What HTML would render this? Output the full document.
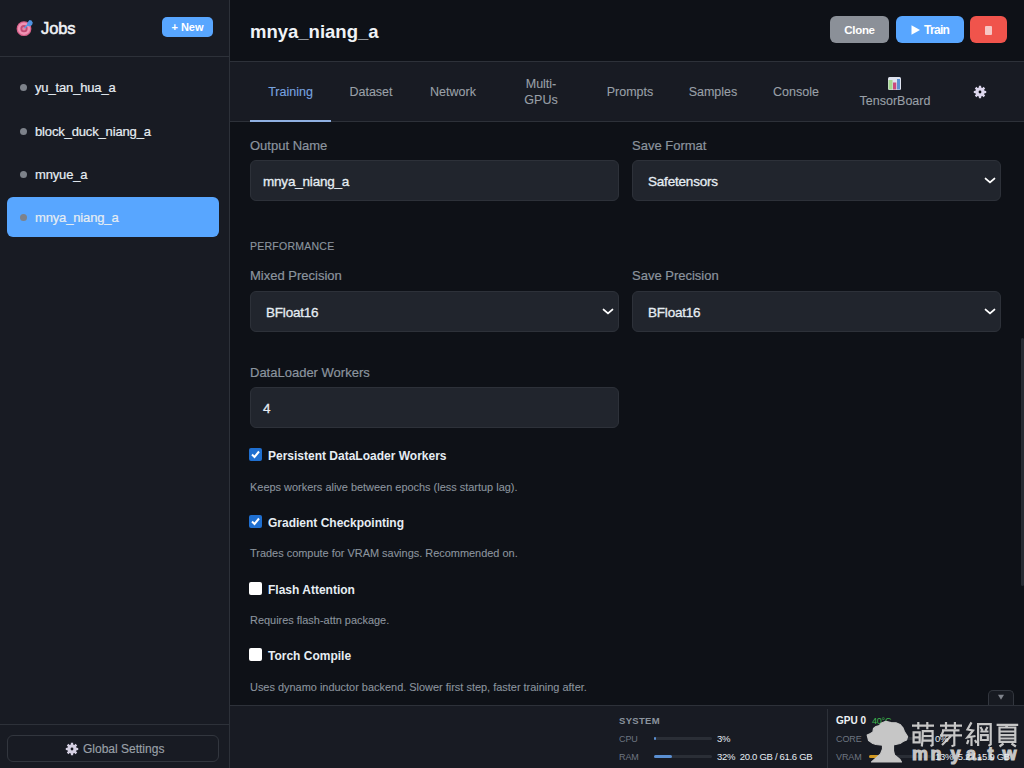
<!DOCTYPE html>
<html><head><meta charset="utf-8">
<style>
*{box-sizing:border-box;margin:0;padding:0}
html,body{width:1024px;height:768px;overflow:hidden;background:#0e1117;font-family:"Liberation Sans",sans-serif;color:#e6edf3}
.abs{position:absolute;white-space:nowrap}
#side{position:absolute;left:0;top:0;width:230px;height:768px;background:#181b23;border-right:1px solid #2d3139}
#side .hdr{position:absolute;left:0;top:0;width:229px;height:57px;border-bottom:1px solid #2d3139}
.newbtn{position:absolute;left:162px;top:17px;width:51px;height:20px;background:#58a6ff;border-radius:5px;color:#fff;font-weight:bold;font-size:11px;line-height:20px;text-align:center}
.job{position:absolute;left:7px;width:212px;height:40px;border-radius:6px}
.job .dot{position:absolute;left:13px;top:17px;width:7px;height:7px;border-radius:50%;background:#7d828a}
.job .t{position:absolute;left:28px;top:1px;line-height:40px;font-size:13px;letter-spacing:-0.15px;color:#e6edf3;-webkit-text-stroke:0.2px #e6edf3}
.job.act{background:#58a6ff}
#main-hdr{position:absolute;left:230px;top:0;width:794px;height:62px;background:#0e1117;border-bottom:1px solid #2d3139}
.btn{position:absolute;top:16px;height:27px;border-radius:6px;color:#fff;font-weight:bold;font-size:12px;line-height:29px;text-align:center}
#tabs{position:absolute;left:230px;top:62px;width:794px;height:60px;background:#181b23;border-bottom:1px solid #2d3139}
.tab{position:absolute;font-size:12.5px;color:#9aa0a8;text-align:center;line-height:16px;white-space:nowrap;-webkit-text-stroke:0.1px currentColor}
.lbl{position:absolute;font-size:13px;color:#8b949e;white-space:nowrap;line-height:16px;margin-top:1px;-webkit-text-stroke:0.2px #8b949e}
.inp{position:absolute;height:41px;background:#21252d;border:1px solid #2d3139;border-radius:6px}
.inp .v{position:absolute;left:12px;top:1px;line-height:39px;font-size:13.5px;letter-spacing:-0.2px;color:#e6edf3;-webkit-text-stroke:0.3px #e6edf3}
.chev{position:absolute;right:4px;top:15.5px}
.cb{position:absolute;left:249px;width:13px;height:13px;border-radius:2px}
.cb.on{background:#1f6fd0}
.cb.off{background:#fff}
.cbt{position:absolute;left:268px;font-size:12px;font-weight:bold;color:#e6edf3;line-height:16px;white-space:nowrap;margin-top:1px}
.help{position:absolute;left:250px;font-size:10.95px;color:#8b949e;line-height:14px;white-space:nowrap;-webkit-text-stroke:0.1px #8b949e}
#status{position:absolute;left:230px;top:705px;width:794px;height:63px;background:#181b23;border-top:1px solid #2d3139}
.st{position:absolute;font-size:10px;white-space:nowrap;line-height:12px}
.bar{position:absolute;height:3px;background:#2a2e36;border-radius:2px}
.bar i{position:absolute;left:0;top:0;height:3px;background:#5a8fd2;border-radius:2px}
</style></head><body>

<div id="side">
  <div class="hdr">
    <svg class="abs" style="left:12px;top:16px" width="26" height="24" viewBox="0 0 26 24">
      <circle cx="12" cy="12.7" r="7.4" fill="#d9628b"/>
      <circle cx="12" cy="12.7" r="6.2" fill="#ef93b4"/>
      <circle cx="12" cy="12.7" r="3.6" fill="#c24a72"/>
      <circle cx="12" cy="12.7" r="1.8" fill="#e184a6"/>
      <path d="M12.5 12 L17 7.5" stroke="#5a9ae6" stroke-width="1.6"/>
      <path d="M15.5 6.5 L17.5 4 L19.5 4.5 L20.8 6.8 L20 9 L17.5 10.5 L15 9.5 Z" fill="#4f93e0"/>
    </svg>
    <div class="abs" style="left:41px;top:18px;font-size:16.5px;letter-spacing:-0.1px;font-weight:normal;line-height:20px;color:#f0f3f6;-webkit-text-stroke:0.55px #f0f3f6">Jobs</div>
    <div class="newbtn">+ New</div>
  </div>
  <div class="job" style="top:67px"><span class="dot"></span><span class="t">yu_tan_hua_a</span></div>
  <div class="job" style="top:111px"><span class="dot"></span><span class="t">block_duck_niang_a</span></div>
  <div class="job" style="top:154px"><span class="dot"></span><span class="t">mnyue_a</span></div>
  <div class="job act" style="top:197px"><span class="dot"></span><span class="t">mnya_niang_a</span></div>

  <div class="abs" style="left:0;top:724px;width:229px;height:1px;background:#2d3139"></div>
  <div class="abs" style="left:7px;top:735px;width:212px;height:27px;border:1px solid #32363e;border-radius:6px"></div>
  <svg class="abs" style="left:65px;top:742px" width="14" height="14" viewBox="0 0 14 14"><path d="M5.81 2.45 L5.89 0.80 L8.11 0.80 L8.19 2.45 L9.37 2.94 L10.60 1.83 L12.17 3.40 L11.06 4.63 L11.55 5.81 L13.20 5.89 L13.20 8.11 L11.55 8.19 L11.06 9.37 L12.17 10.60 L10.60 12.17 L9.37 11.06 L8.19 11.55 L8.11 13.20 L5.89 13.20 L5.81 11.55 L4.63 11.06 L3.40 12.17 L1.83 10.60 L2.94 9.37 L2.45 8.19 L0.80 8.11 L0.80 5.89 L2.45 5.81 L2.94 4.63 L1.83 3.40 L3.40 1.83 L4.63 2.94 Z" fill="#d4cfe2"/><circle cx="7" cy="7" r="1.4" fill="#181b23"/></svg>
  <div class="abs" style="left:83px;top:742px;font-size:12px;line-height:14px;color:#9aa0a8;-webkit-text-stroke:0.15px #9aa0a8">Global Settings</div>
</div>

<div id="main-hdr"></div>
<div class="abs" style="left:250px;top:21px;font-size:18.5px;font-weight:bold;line-height:22px;color:#f0f3f6">mnya_niang_a</div>
<div class="btn" style="left:830px;width:59px;background:#8b9098;font-size:11.5px;letter-spacing:-0.3px">Clone</div>
<div class="btn" style="left:896px;width:68px;background:#58a6ff;text-align:left;padding-left:28px;letter-spacing:-0.7px">Train</div>
<svg class="abs" style="left:911px;top:25px" width="10" height="10" viewBox="0 0 10 10"><path d="M0.5 0.3 L9 5 L0.5 9.7 Z" fill="#fff"/></svg>
<div class="btn" style="left:970px;width:37px;background:#f0544c"><span style="display:inline-block;width:7px;height:9px;background:#f7c6c4;border-radius:1px;vertical-align:-1px"></span></div>

<div id="tabs"></div>
<div class="tab" style="left:250px;top:84px;width:81px;color:#78a4e0">Training</div>
<div class="abs" style="left:250px;top:120px;width:81px;height:2px;background:#8fb0e2"></div>
<div class="tab" style="left:331px;top:84px;width:80px">Dataset</div>
<div class="tab" style="left:411px;top:84px;width:84px">Network</div>
<div class="tab" style="left:501px;top:76px;width:80px">Multi-<br>GPUs</div>
<div class="tab" style="left:590px;top:84px;width:80px">Prompts</div>
<div class="tab" style="left:673px;top:84px;width:80px">Samples</div>
<div class="tab" style="left:756px;top:84px;width:80px">Console</div>
<div class="tab" style="left:845px;top:93px;width:100px">TensorBoard</div>
<svg class="abs" style="left:888px;top:77px" width="13" height="13" viewBox="0 0 13 13">
  <rect x="0" y="0" width="13" height="13" rx="1.5" fill="#dfe3ef"/>
  <rect x="0.5" y="3" width="4" height="9.5" fill="#a6d68e"/>
  <rect x="5" y="5.5" width="3.3" height="7" fill="#c94a7f"/>
  <rect x="9" y="2" width="3" height="10.5" fill="#5b8fd2"/>
</svg>
<svg class="abs" style="left:973px;top:84.5px" width="14" height="14" viewBox="0 0 14 14"><path d="M5.81 2.45 L5.89 0.80 L8.11 0.80 L8.19 2.45 L9.37 2.94 L10.60 1.83 L12.17 3.40 L11.06 4.63 L11.55 5.81 L13.20 5.89 L13.20 8.11 L11.55 8.19 L11.06 9.37 L12.17 10.60 L10.60 12.17 L9.37 11.06 L8.19 11.55 L8.11 13.20 L5.89 13.20 L5.81 11.55 L4.63 11.06 L3.40 12.17 L1.83 10.60 L2.94 9.37 L2.45 8.19 L0.80 8.11 L0.80 5.89 L2.45 5.81 L2.94 4.63 L1.83 3.40 L3.40 1.83 L4.63 2.94 Z" fill="#dcd6ec"/><circle cx="7" cy="7" r="1.4" fill="#0b0d12"/></svg>

<div class="lbl" style="left:250px;top:137px">Output Name</div>
<div class="inp" style="left:250px;top:160px;width:369px"><span class="v">mnya_niang_a</span></div>
<div class="lbl" style="left:632px;top:137px">Save Format</div>
<div class="inp" style="left:632px;top:160px;width:369px"><span class="v" style="left:15px">Safetensors</span>
  <svg class="chev" width="12" height="8" viewBox="0 0 12 8"><path d="M1.6 1.6 L6 5.4 L10.4 1.6" fill="none" stroke="#fff" stroke-width="1.9" stroke-linecap="round" stroke-linejoin="round"/></svg></div>

<div class="abs" style="left:250px;top:240px;font-size:10.5px;letter-spacing:0.25px;color:#8b949e;line-height:12px;-webkit-text-stroke:0.15px #8b949e">PERFORMANCE</div>

<div class="lbl" style="left:250px;top:267px">Mixed Precision</div>
<div class="inp" style="left:250px;top:291px;width:369px"><span class="v" style="left:15px">BFloat16</span>
  <svg class="chev" width="12" height="8" viewBox="0 0 12 8"><path d="M1.6 1.6 L6 5.4 L10.4 1.6" fill="none" stroke="#fff" stroke-width="1.9" stroke-linecap="round" stroke-linejoin="round"/></svg></div>
<div class="lbl" style="left:632px;top:267px">Save Precision</div>
<div class="inp" style="left:632px;top:291px;width:369px"><span class="v" style="left:15px">BFloat16</span>
  <svg class="chev" width="12" height="8" viewBox="0 0 12 8"><path d="M1.6 1.6 L6 5.4 L10.4 1.6" fill="none" stroke="#fff" stroke-width="1.9" stroke-linecap="round" stroke-linejoin="round"/></svg></div>

<div class="lbl" style="left:250px;top:364px">DataLoader Workers</div>
<div class="inp" style="left:250px;top:387px;width:369px"><span class="v">4</span></div>

<div class="cb on" style="top:448px"><svg width="13" height="13" viewBox="0 0 13 13" style="position:absolute;left:0;top:0"><path d="M3 6.5 L5.5 9 L10 3.5" fill="none" stroke="#fff" stroke-width="2"/></svg></div>
<div class="cbt" style="top:447px">Persistent DataLoader Workers</div>
<div class="help" style="top:480px">Keeps workers alive between epochs (less startup lag).</div>

<div class="cb on" style="top:515px"><svg width="13" height="13" viewBox="0 0 13 13" style="position:absolute;left:0;top:0"><path d="M3 6.5 L5.5 9 L10 3.5" fill="none" stroke="#fff" stroke-width="2"/></svg></div>
<div class="cbt" style="top:514px">Gradient Checkpointing</div>
<div class="help" style="top:546px">Trades compute for VRAM savings. Recommended on.</div>

<div class="cb off" style="top:582px"></div>
<div class="cbt" style="top:581px">Flash Attention</div>
<div class="help" style="top:613px">Requires flash-attn package.</div>

<div class="cb off" style="top:648px"></div>
<div class="cbt" style="top:647px">Torch Compile</div>
<div class="help" style="top:680px">Uses dynamo inductor backend. Slower first step, faster training after.</div>

<div class="abs" style="left:1021px;top:338px;width:3px;height:248px;background:#272b33;border-radius:2px"></div>
<div class="abs" style="left:988px;top:690px;width:26px;height:16px;border:1px solid #32363e;border-bottom:none;border-radius:5px 5px 0 0;background:#171a21"></div>
<svg class="abs" style="left:997px;top:694px" width="8" height="7" viewBox="0 0 8 7"><path d="M1 0.8 H7 L4 5.8 Z" fill="#80848c"/></svg>

<div id="status"></div>
<div class="st" style="left:619px;top:715px;font-size:9.5px;font-weight:bold;letter-spacing:0.3px;color:#8b949e">SYSTEM</div>
<div class="st" style="left:619px;top:733px;color:#6e7681;font-size:9px;letter-spacing:-0.1px">CPU</div>
<div class="bar" style="left:654px;top:737px;width:58px"><i style="width:2px"></i></div>
<div class="st" style="left:717px;top:733px;color:#e6edf3;font-size:9.5px;letter-spacing:-0.3px">3%</div>
<div class="st" style="left:619px;top:751px;color:#6e7681;font-size:9px;letter-spacing:-0.1px">RAM</div>
<div class="bar" style="left:654px;top:755px;width:58px"><i style="width:18px"></i></div>
<div class="st" style="left:717px;top:751px;color:#e6edf3;font-size:9.5px;letter-spacing:-0.3px">32%&nbsp; 20.0 GB / 61.6 GB</div>
<div class="abs" style="left:827px;top:709px;width:1px;height:59px;background:#2d3139"></div>
<div class="st" style="left:836px;top:715px;font-weight:bold;font-size:10px;color:#f0f3f6">GPU 0</div>
<div class="st" style="left:872px;top:715px;color:#3fb950;font-size:9px;letter-spacing:-0.2px">40&deg;C</div>
<div class="st" style="left:836px;top:733px;color:#6e7681;font-size:9px;letter-spacing:-0.1px">CORE</div>
<div class="st" style="left:836px;top:751px;color:#6e7681;font-size:9px;letter-spacing:-0.1px">VRAM</div>
<div class="bar" style="left:869px;top:737px;width:62px"><i style="width:1px"></i></div>
<div class="bar" style="left:869px;top:755px;width:62px"><i style="width:10px;background:#d29922"></i></div>
<svg class="abs" style="left:860px;top:712px" width="55" height="55" viewBox="0 0 55 55">
 <path fill="#c6c6c6" stroke="#c6c6c6" stroke-width="1.2" stroke-linejoin="round" d="M21.5 11 L25.8 9.3 L31 10.5 L36 10.8 L40 12.5 L43 16 L44.4 19.5 L47.6 24.5 L46.5 28 L43 29.5 L40 31.5 L33.5 33 L33.5 39 L34.5 43 L40 47.5 L41.5 50 L11.5 50 L16 46 L20.5 42 L22.5 37 L22.5 33.2 L16 32.5 L12.9 31.5 L8.6 28.6 L7.2 23 L10.5 21.5 L12.9 20 L13.5 16.5 L16 14.5 L19.3 13.6 Z"/>
</svg>
<svg class="abs" style="left:905px;top:715px" width="119" height="53" viewBox="905 715 119 53">
 <g fill="none" stroke="#c6c6c6" stroke-width="2.2" stroke-linecap="butt">
  <path d="M912 725.7 H934 M918.3 722 V729.2 M927.3 722 V729.2"/>
  <path d="M913.6 732.4 H919.7 V742.4 H913.6 Z M913.6 737.4 H919.7"/>
  <path d="M921.8 746.5 Q922.8 740 922.8 731.2 H932.6 V745 L930.5 746 M922.8 736 H932.6 M922.8 740.6 H932.6"/>
  <path d="M940 725.7 H962 M946 722 V729.2 M954.9 722 V729.2"/>
  <path d="M942 730.3 H959.5 M943.5 730.3 L941.5 735.3 M940 735.3 H962 M954.3 730.3 V745.3 L951.5 746.3 M951 736 L942 745"/>
  <path d="M971.5 722.4 L967.5 729.5 L973 730.5 L967.5 737.5 L975.5 736 M971.5 736.5 V746 M968.5 740 L967 744 M975 740 L976.6 743"/>
  <path d="M978.1 746 V724.2 H990.7 V744.5 L988.5 745.9 M980.5 727 L982.5 730.5 M987.5 727 L985.5 730.5 M980.3 731.5 H988.5 M981 735.2 H987.8 V740 H981 Z"/>
  <path d="M996.6 724.8 H1018.2 M1007.5 724.8 L1006 727.2 M999.5 727.5 H1015.3 V741.8 H999.5 Z M999.5 731.5 H1015.3 M999.5 735.1 H1015.3 M999.5 738.5 H1015.3 M1003.5 743.5 L999.5 746.5 M1011.5 743.5 L1015.9 746.5"/>
 </g>
 <g fill="#c6c6c6" stroke="#c6c6c6" stroke-width="1.1" font-family="Liberation Sans" font-weight="bold" font-size="18">
  <text x="912" y="760">m</text><text x="930.5" y="760">n</text><text x="950.5" y="760">y</text>
  <text x="966" y="760">a</text><text x="977" y="760">.</text><text x="987.5" y="760">t</text><text x="1002.5" y="760">w</text>
 </g>
</svg>
<div class="st" style="left:935px;top:733px;color:#e6edf3;font-size:9.5px;letter-spacing:-0.3px">0%</div>
<div class="st" style="left:935px;top:751px;color:#e6edf3;font-size:9.5px;letter-spacing:-0.3px">13%&nbsp; 5.2 / 15.9 GB</div>
</body></html>
